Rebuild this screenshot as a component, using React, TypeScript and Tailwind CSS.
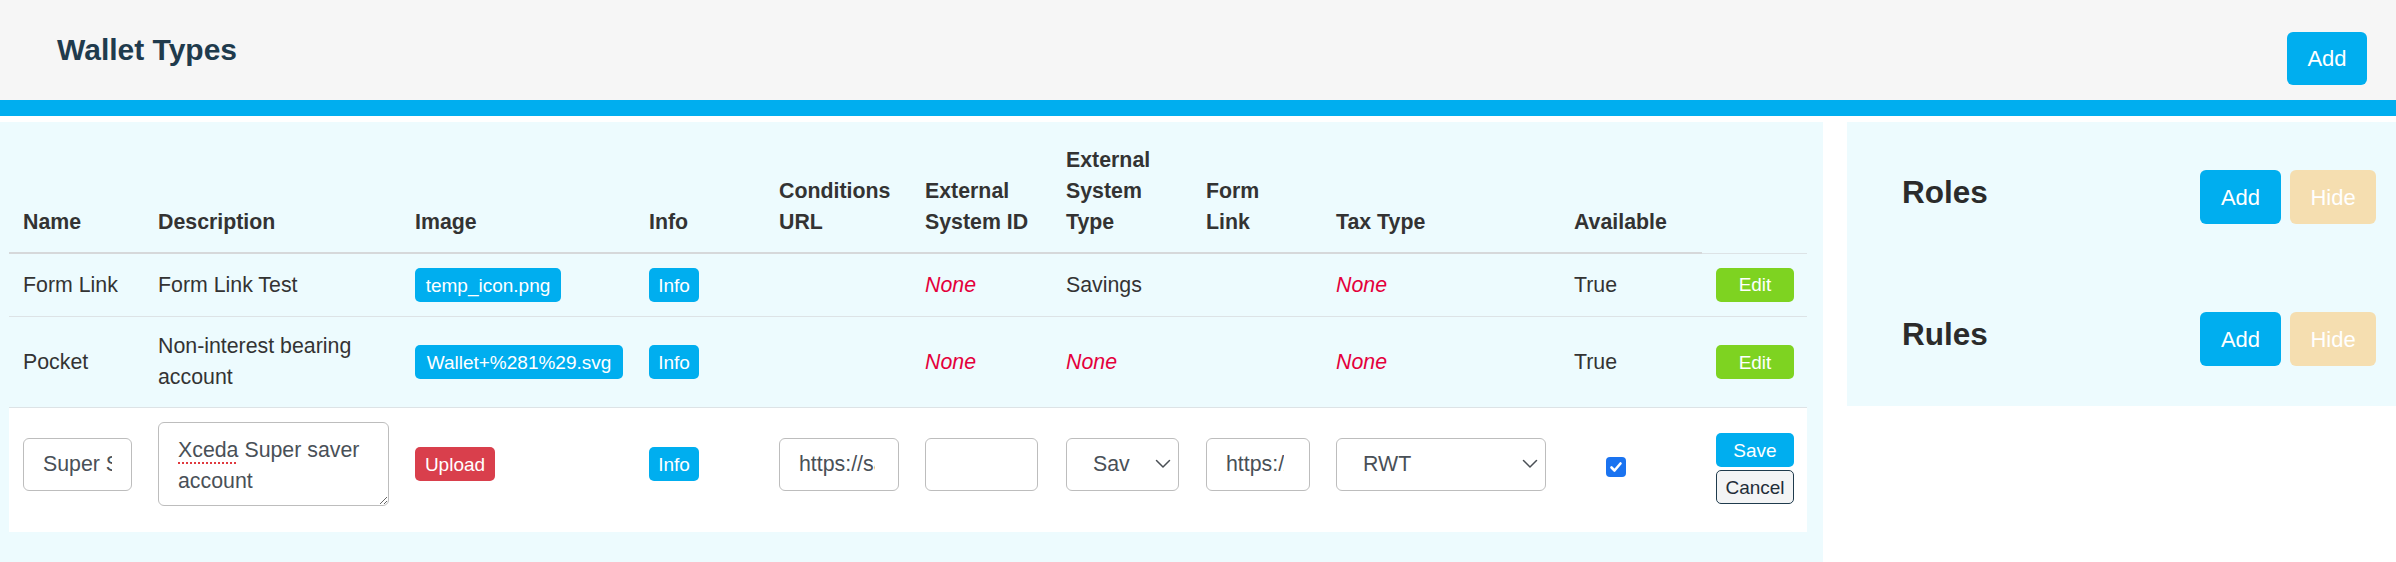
import React from "react";

const cols = [135, 257, 234, 130, 146, 141, 140, 130, 238, 142, 105];

const Btn = ({
  children,
  className = "",
}: {
  children: React.ReactNode;
  className?: string;
}) => (
  <span
    className={
      "inline-flex items-center justify-center h-[34px] rounded-[5px] text-[19px] leading-none whitespace-nowrap " +
      className
    }
  >
    {children}
  </span>
);

const None = () => <em className="text-[#e4003b]">None</em>;

const Chevron = () => (
  <svg width="16" height="10" viewBox="0 0 16 10" fill="none">
    <path d="M1.5 1.5 L8 8 L14.5 1.5" stroke="#4a4f55" strokeWidth="1.5" strokeLinecap="round" strokeLinejoin="round" />
  </svg>
);

const inputCls =
  "h-[53px] rounded-[6px] border border-[#bdbdbd] bg-white pl-[19px] text-[21.33px] text-[#495057] outline-none font-['Liberation_Sans',Arial,sans-serif]";

export default function App() {
  const td = "px-[14px] pt-[14px] pb-[14px] border-t border-[#dde3e6] align-middle";
  const td3 = "px-[14px] pt-[14px] pb-[26px] border-t border-[#dde3e6] align-middle";
  const th =
    "px-[14px] py-[14px] text-left font-bold align-bottom border-b-2 border-[#d6d8da] whitespace-nowrap";
  return (
    <div className="w-[2396px] h-[562px] overflow-hidden bg-white font-['Liberation_Sans',Arial,sans-serif] text-[#333]">
      <header className="h-[100px] bg-[#f6f6f6] flex items-center justify-between pl-[57px] pr-[29px]">
        <h1 className="text-[30px] font-bold text-[#1f3b4d] leading-none">Wallet Types</h1>
        <button className="mt-[17px] w-[80px] h-[53px] rounded-[6px] bg-[#00aeef] text-white text-[22px]">
          Add
        </button>
      </header>
      <div className="h-[16px] bg-[#00aeef]" />
      <div className="flex gap-[24px] pt-[6px]">
        <div className="w-[1823px] shrink-0 bg-[#edfbfe] pt-[9px] pl-[9px] pr-[16px] pb-[40px]">
          <table className="table-fixed border-collapse w-[1798px] text-[21.33px] leading-[31px]">
            <colgroup>
              {cols.map((w, i) => (
                <col key={i} style={{ width: w }} />
              ))}
            </colgroup>
            <thead>
              <tr>
                <th className={th}>Name</th>
                <th className={th}>Description</th>
                <th className={th}>Image</th>
                <th className={th}>Info</th>
                <th className={th}>
                  Conditions
                  <br />
                  URL
                </th>
                <th className={th}>
                  External
                  <br />
                  System ID
                </th>
                <th className={th}>
                  External
                  <br />
                  System
                  <br />
                  Type
                </th>
                <th className={th}>
                  Form
                  <br />
                  Link
                </th>
                <th className={th}>Tax Type</th>
                <th className={th}>Available</th>
                <th className="px-[14px] py-[14px]" />
              </tr>
            </thead>
            <tbody>
              <tr>
                <td className={td}>Form Link</td>
                <td className={td}>Form Link Test</td>
                <td className={td}>
                  <Btn className="w-[146px] bg-[#00aeef] text-white">temp_icon.png</Btn>
                </td>
                <td className={td}>
                  <Btn className="w-[50px] bg-[#00aeef] text-white">Info</Btn>
                </td>
                <td className={td}></td>
                <td className={td}>
                  <None />
                </td>
                <td className={td}>Savings</td>
                <td className={td}></td>
                <td className={td}>
                  <None />
                </td>
                <td className={td}>True</td>
                <td className={td}>
                  <Btn className="w-[78px] bg-[#7ed321] text-white">Edit</Btn>
                </td>
              </tr>
              <tr>
                <td className={td}>Pocket</td>
                <td className={td}>
                  Non-interest bearing
                  <br />
                  account
                </td>
                <td className={td}>
                  <Btn className="w-[208px] bg-[#00aeef] text-white">Wallet+%281%29.svg</Btn>
                </td>
                <td className={td}>
                  <Btn className="w-[50px] bg-[#00aeef] text-white">Info</Btn>
                </td>
                <td className={td}></td>
                <td className={td}>
                  <None />
                </td>
                <td className={td}>
                  <None />
                </td>
                <td className={td}></td>
                <td className={td}>
                  <None />
                </td>
                <td className={td}>True</td>
                <td className={td}>
                  <Btn className="w-[78px] bg-[#7ed321] text-white">Edit</Btn>
                </td>
              </tr>
              <tr className="bg-white">
                <td className={td3}>
                  <input readOnly defaultValue="Super Saver" className={inputCls + " w-[109px] pr-[19px]"} />
                </td>
                <td className={td3}>
                  <div className="w-[231px] h-[84px] rounded-[6px] border border-[#bdbdbd] bg-white pl-[19px] pr-[10px] pt-[12px] text-[#495057] leading-[31px] overflow-hidden resize">
                    <span className="underline decoration-dotted decoration-[#e0393e] decoration-2 underline-offset-[5px]">
                      Xceda
                    </span>{" "}
                    Super saver
                    <br />
                    account
                  </div>
                </td>
                <td className={td3}>
                  <Btn className="w-[80px] bg-[#d93f4c] text-white">Upload</Btn>
                </td>
                <td className={td3}>
                  <Btn className="w-[50px] bg-[#00aeef] text-white">Info</Btn>
                </td>
                <td className={td3}>
                  <input readOnly defaultValue="https://savings.example.com" className={inputCls + " w-[120px] pr-[23px]"} />
                </td>
                <td className={td3}>
                  <input readOnly defaultValue="" className={inputCls + " w-[113px] pr-[19px]"} />
                </td>
                <td className={td3}>
                  <div className={inputCls + " w-[113px] flex items-center justify-between pl-[26px] pr-[7px]"}>
                    <span className="whitespace-nowrap">Sav</span>
                    <Chevron />
                  </div>
                </td>
                <td className={td3}>
                  <input readOnly defaultValue="https://forms.example.com" className={inputCls + " w-[104px] pr-[25px]"} />
                </td>
                <td className={td3}>
                  <div className={inputCls + " w-[210px] flex items-center justify-between pl-[26px] pr-[7px]"}>
                    <span>RWT</span>
                    <Chevron />
                  </div>
                </td>
                <td className={td3}>
                  <span className="ml-[32px] mt-[6px] flex items-center justify-center w-[20px] h-[20px] rounded-[4px] bg-[#1a73f0]">
                    <svg width="14" height="14" viewBox="0 0 14 14" fill="none">
                      <path d="M2.5 7.5 L5.5 10.5 L11.5 3.5" stroke="white" strokeWidth="2.6" strokeLinecap="round" strokeLinejoin="round" />
                    </svg>
                  </span>
                </td>
                <td className={td3}>
                  <div className="mt-[9px] flex flex-col gap-[3px]">
                    <Btn className="w-[78px] bg-[#00aeef] text-white">Save</Btn>
                    <Btn className="w-[78px] bg-[#f3f4f5] text-[#1f2d38] border border-[#1f3b4d]">Cancel</Btn>
                  </div>
                </td>
              </tr>
            </tbody>
          </table>
        </div>
        <div className="flex-1 h-[284px] bg-[#edfbfe] pl-[55px] pr-[20px] pt-[48px]">
          <div className="flex items-center justify-between h-[54px]">
            <h3 className="mb-[8px] text-[31.5px] font-bold text-[#2b2b2b] leading-none">Roles</h3>
            <div className="flex gap-[9px]">
              <button className="w-[81px] h-[54px] rounded-[6px] bg-[#00aeef] text-white text-[22px]">Add</button>
              <button className="w-[86px] h-[54px] rounded-[6px] bg-[#f5deb0] text-white text-[22px]">Hide</button>
            </div>
          </div>
          <div className="mt-[88px] flex items-center justify-between h-[54px]">
            <h3 className="mb-[8px] text-[31.5px] font-bold text-[#2b2b2b] leading-none">Rules</h3>
            <div className="flex gap-[9px]">
              <button className="w-[81px] h-[54px] rounded-[6px] bg-[#00aeef] text-white text-[22px]">Add</button>
              <button className="w-[86px] h-[54px] rounded-[6px] bg-[#f5deb0] text-white text-[22px]">Hide</button>
            </div>
          </div>
        </div>
      </div>
    </div>
  );
}
